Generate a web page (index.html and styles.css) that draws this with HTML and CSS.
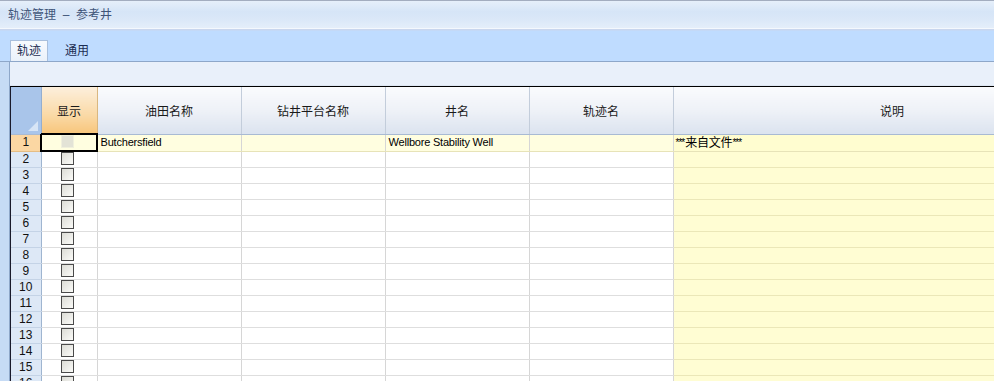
FILE: index.html
```html
<html>
<head>
  <title>轨迹管理 - 参考井</title>
  <link rel="stylesheet" href="styles.css">
</head>
<body>
  <div class="window">
    <div class="titlebar">轨迹管理 &nbsp;–&nbsp; 参考井</div>
    <div class="tabstrip">
      <div class="tab active">轨迹</div>
      <div class="tab">通用</div>
    </div>
    <div class="tabpage">
      <div class="toolbar"></div>
      <div class="grid">
        <table>
          <colgroup>
            <col class="c-num"><col class="c-show"><col class="c-w"><col class="c-w"><col class="c-w"><col class="c-w"><col class="c-desc">
          </colgroup>
          <thead>
            <tr>
              <th class="corner"><span class="tri"></span></th>
              <th class="sel">显示</th>
              <th>油田名称</th>
              <th>钻井平台名称</th>
              <th>井名</th>
              <th>轨迹名</th>
              <th>说明</th>
            </tr>
          </thead>
          <tbody id="rows">
            <tr class="current">
              <td class="num">1</td>
              <td class="show cur"><span class="box faded"></span></td>
              <td>Butchersfield</td>
              <td></td>
              <td>Wellbore Stability Well</td>
              <td></td>
              <td class="desc"><span class="stars">***</span>来自文件<span class="stars">***</span></td>
            </tr>
          </tbody>
        </table>
      </div>
    </div>
  </div>

  <script>
    // empty rows 2..16
    let body = document.getElementById("rows");
    for (let i = 2; i <= 16; i++) {
      let tr = document.createElement("tr");
      tr.innerHTML = '<td class="num">' + i + '</td><td class="show"><span class="box"></span></td>' +
        '<td></td><td></td><td></td><td></td><td class="desc"></td>';
      body.appendChild(tr);
    }
  </script>
</body>
</html>
```

FILE: styles.css
```css
body { margin: 0; font-family: "Liberation Sans", "Noto Sans CJK SC", sans-serif; font-size: 11px;
  color: #000; background: #c6dbf5; overflow: hidden; }
.window { width: 994px; height: 381px; overflow: hidden; }
.titlebar { height: 27px; line-height: 29px; padding-left: 8px; font-size: 12px; color: #3e5478;
  border-top: 1px solid #a3adbf; background: linear-gradient(#e6effa, #d6e5f7 40%, #dbe8f8 70%, #e4eefa); }
.tabstrip { height: 32px; display: flex; align-items: flex-end; padding-left: 10px;
  border-top: 1px solid #f4f8fd; border-bottom: 1px solid #8ea7c9;
  background: linear-gradient(#c9d6ee 0, #c9d6ee 1px, #bfdcff 2px); }
.tab { height: 20px; line-height: 21px; padding: 0 7px; font-size: 12px; color: #1b2c52; margin-right: 3px; }
.tab.active { background: linear-gradient(#f7fafe, #eaf1fa); border: 1px solid #a9bfdc; border-bottom: none;
  padding: 0 6px; margin-right: 10px; }
.tabpage { margin-left: 9px; border-left: 1px solid #8ea7c9; background: #e9f0fa; }
.toolbar { height: 23px; background: #e9f0fa; border-bottom: 1px solid #dde6f2; }
.grid { border-top: 1px solid #000; border-left: 1px solid #1a1a2a; background: #fff; height: 300px; overflow: hidden; }
table { border-collapse: collapse; table-layout: fixed; width: 1100px; font-size: 11px; }
.c-num { width: 30px; } .c-show { width: 56px; } .c-w { width: 144px; } .c-desc { width: 438px; }
th { height: 47px; font-weight: normal; font-size: 12px; color: #1a1a1a; padding: 0;
  background: linear-gradient(#fafbfd, #eef1f7 50%, #dbe3ef); border-right: 1px solid #c3cddb;
  border-bottom: 1px solid #a8bad3; }
th.sel { background: linear-gradient(#fcefdc, #fad9a6 60%, #f7c57a); border-right-color: #d9b780; }
th.corner { background: #a9c5ea; position: relative; border-right-color: #94aed0; }
.tri { position: absolute; right: 3px; bottom: 3px; width: 0; height: 0;
  border-left: 10px solid transparent; border-bottom: 10px solid #d7e5f6; }
td { height: 15px; padding: 0 3px; border-right: 1px solid #d6d6d6; border-bottom: 1px solid #dedede;
  white-space: nowrap; overflow: hidden; line-height: 15px; font-size: 11px; letter-spacing: -0.2px; }
td.num { text-align: center; background: #dde8f6; border-right: 1px solid #9fb5d0;
  border-bottom: 1px solid #c4d3e6; color: #111; font-size: 12px; padding: 0; letter-spacing: 0; }
td.show { text-align: center; padding: 0 4px 0 0; }
td.desc { background: #fffdd3; border-bottom-color: #ebe7b8; border-left: 1px solid #c9c9c9; font-size: 12px; padding-left: 2px; }
.stars { font-size: 10px; vertical-align: 1px; letter-spacing: -1px; margin-right: 1px; }
tr.current td { background: #fffee0; border-bottom-color: #e7e3b8; }
tr.current td.num { background: #fbd7a3; border-bottom-color: #e5bd84; }
tr.current td.desc { background: #fffdd0; }
td.cur { outline: 2px solid #000; outline-offset: -1px; }
.box { display: inline-block; width: 11px; height: 11px; vertical-align: middle;
  border: 1px solid #4a4a4a; background: linear-gradient(135deg, #dcdcd6, #fbfbf8); margin-top: -2px; }
.box.faded { border-color: #f0f0dc; background: #e3e3d6; }
```
